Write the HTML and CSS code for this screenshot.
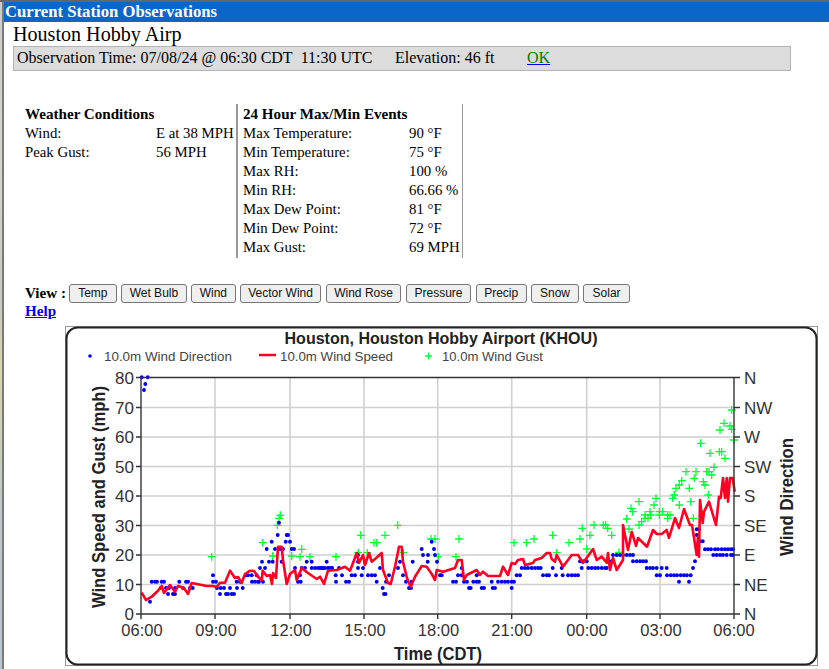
FILE: index.html
```html
<!DOCTYPE html>
<html lang="en">
<head>
<meta charset="utf-8">
<title>Current Station Observations</title>
<link rel="stylesheet" href="styles.css">
</head>
<body>
<div class="window">
  <div class="edge"></div>
  <main class="main">
    <h1 class="banner">Current Station Observations</h1>
    <div class="station">Houston Hobby Airp</div>
    <div class="obsbar">
      <span class="obstime">Observation Time: 07/08/24 @ 06:30 CDT&nbsp; 11:30 UTC</span>
      <span class="elev">Elevation: 46 ft</span>
      <a class="ok" href="#">OK</a>
    </div>
    <section class="tables">
      <div class="panel panel-left">
        <div class="ptitle">Weather Conditions</div>
        <div class="row"><span>Wind:</span><span>E at 38 MPH</span></div>
        <div class="row"><span>Peak Gust:</span><span>56 MPH</span></div>
      </div>
      <div class="panel panel-right">
        <div class="ptitle">24 Hour Max/Min Events</div>
        <div class="row"><span>Max Temperature:</span><span>90 °F</span></div>
        <div class="row"><span>Min Temperature:</span><span>75 °F</span></div>
        <div class="row"><span>Max RH:</span><span>100 %</span></div>
        <div class="row"><span>Min RH:</span><span>66.66 %</span></div>
        <div class="row"><span>Max Dew Point:</span><span>81 °F</span></div>
        <div class="row"><span>Min Dew Point:</span><span>72 °F</span></div>
        <div class="row"><span>Max Gust:</span><span>69 MPH</span></div>
      </div>
    </section>
    <div class="viewrow">
      <b class="viewlabel">View :</b>
      <button class="b-temp">Temp</button>
      <button class="b-wet">Wet Bulb</button>
      <button class="b-wind">Wind</button>
      <button class="b-vec">Vector Wind</button>
      <button class="b-rose">Wind Rose</button>
      <button class="b-pres">Pressure</button>
      <button class="b-prec">Precip</button>
      <button class="b-snow">Snow</button>
      <button class="b-solar">Solar</button>
    </div>
    <a class="help" href="#">Help</a>
    <svg class="chart" viewBox="65 326 753 340" width="753" height="340" role="img" aria-label="Wind chart">
      <defs>
        <marker id="dot" markerUnits="userSpaceOnUse" markerWidth="5" markerHeight="5" refX="2.5" refY="2.5"><circle cx="2.5" cy="2.5" r="1.95" class="m-dot"/></marker>
        <marker id="plus" markerUnits="userSpaceOnUse" markerWidth="8" markerHeight="8" refX="4" refY="4"><path d="M0 4h8M4 0v8" class="m-plus"/></marker>
      </defs>
      <rect class="frame-square" x="65.5" y="326.5" width="752" height="339"/>
      <rect class="frame-round" x="66.5" y="327.5" width="750" height="337" rx="11"/>

      <text class="title" x="441" y="344" textLength="313" lengthAdjust="spacingAndGlyphs">Houston, Houston Hobby Airport (KHOU)</text>
      <circle class="legend-dot" cx="90" cy="356" r="1.8"/>
      <text class="legend" x="104" y="361" textLength="128" lengthAdjust="spacingAndGlyphs">10.0m Wind Direction</text>
      <path class="legend-line" d="M259 355h17"/>
      <text class="legend" x="280" y="361" textLength="113" lengthAdjust="spacingAndGlyphs">10.0m Wind Speed</text>
      <path class="legend-plus" d="M425 356h7M428.5 352.500v7"/>
      <text class="legend" x="442" y="361" textLength="101" lengthAdjust="spacingAndGlyphs">10.0m Wind Gust</text>

      <path class="grid" d="M215 378V614M290 378V614M364 378V614M437.700 378V614M511.700 378V614M586.700 378V614M660 378V614M141 407.500H734M141 437H734M141 466.500H734M141 496H734M141 525.500H734M141 555H734M141 584.500H734"/>

      <polyline class="gust" points="211.700,556.700 262.700,542.700 272.700,556 277.300,525.300 279,518.300 280.300,515.300 291.700,556 300,556.700 301.700,549.300 310,556.700 336,556.700 358.300,552.700 360.700,535.300 367.300,552.700 374,542.700 376.700,542.700 385,535.300 397.700,525.300 403.300,552.700 431,539 435,539 438.300,556.700 456,556.700 459,539 514,542.700 526.500,542.700 534,539 552.700,535.300 556.700,552.700 569,542.700 580,539 582.300,528.300 586.700,549 590,535.300 594,525 603.300,525 605.700,525 607.700,528.300 611.700,535.300 619,552.300 626.700,519 629,529 631,508.300 632.700,511.700 639,501.700 639,525 641.700,521.700 645,515 645,518.300 648,518.300 650,511.700 650.700,515 654,505 656,498.300 659.300,511.700 659.300,515 662.700,511.700 667.700,515 667.700,518.300 670,515 672.700,498.300 674.300,495 676,488.300 679.300,485 681.700,480.700 679.300,505 686,471.700 689.300,488.300 690.700,501.700 693.300,518.300 694.300,478.300 696,471.700 700.700,443.300 703.300,481.700 705,485 708.300,495 706.700,471.700 710,453.300 709,471.700 711.700,475 714,467.300 719.300,451.700 721.700,451.700 725,458.300 720,430 724,423.300 730,426 731.700,429.300 734,440 731.700,410"/>

      <polyline class="dir" points="141.700,377.300 147.700,377.300 145.300,384 144,390 150,601.700 151.700,581.700 155,581.700 157,581.700 161.700,581.700 164,581.700 179.300,581.700 186,581.700 188,581.700 213,581.700 216,581.700 236.700,581.700 240,581.700 252,581.700 255,581.700 258,581.700 259,581.700 263,581.700 298,581.700 300.700,581.700 336,581.700 346,581.700 349,581.700 376.700,581.700 386,581.700 406,581.700 411.700,581.700 453,581.700 456,581.700 464,581.700 467,581.700 473.300,581.700 476.700,581.700 479,581.700 491.700,581.700 498,581.700 501.700,581.700 505,581.700 508,581.700 511.700,581.700 514,581.700 679,581.700 689,581.700 160.700,588 166,588 169,588 175,588 183,588 190,588 192.700,588 217,588 220.700,588 224,588 230,588 237,588 242.700,588 382.700,588 409,588 411,588 469,588 470.700,588 481.700,588 484,588 492.700,588 495,588 511.700,588 168,594 173,594 175,594 220,594 226,594 228,594 231.700,594 234,594 384,594 385.500,594 213,575.300 246,575.300 248,575.300 251.700,575.300 256.700,575.300 300,575.300 335.700,575.300 342,575.300 351.700,575.300 355,575.300 361.700,575.300 368,575.300 371.700,575.300 375,575.300 389,575.300 403,575.300 440,575.300 441.700,575.300 458,575.300 461.700,575.300 476.700,575.300 516.700,575.300 520,575.300 543,575.300 546.700,575.300 549,575.300 556,575.300 562.700,575.300 568,575.300 571.700,575.300 575,575.300 578,575.300 656.700,575.300 660,575.300 667,575.300 670.700,575.300 674,575.300 677,575.300 680.700,575.300 684,575.300 687,575.300 690.700,575.300 260,568 265,568 295,568 301.700,568 305,568 311.700,568 315,568 318,568 321.700,568 325,568 328,568 331.700,568 320,568 323,568 329,568 332,568 339,568 358,568 363,568 380,568 398,568 461.700,568 521.700,568 525,568 528,568 531.700,568 535,568 538,568 540.700,568 552.700,568 561.700,568 581.700,568 588.300,568 591.700,568 595,568 598,568 601.700,568 605,568 606.700,568 646.700,568 650,568 653,568 656.700,568 661.700,568 666.700,568 693,568 262,561.700 269,561.700 272.700,561.700 281.700,561.700 306.700,561.700 311.700,561.700 326.700,561.700 358,561.700 365,561.700 400,561.700 412.700,561.700 427.700,561.700 437,561.700 580,561.300 583,561.300 586.700,561.300 608,561.300 611.700,561.300 633,561.300 636.700,561.300 640,561.300 643,561.300 646,561.300 695,561.300 358,555 423,555 428,555 435,555 613,555 616.700,555 620,555 623,555 626.700,555 630,555 633,555 713.300,555 716.700,555 720,555 723,555 726.700,555 731,555 733,555 266.700,549 275,549 280,549 283,549 291.700,549 294,549 421.700,549 434,549 705,549.300 708,549.300 711,549.300 715,549.300 718,549.300 721.700,549.300 725,549.300 728,549.300 731,549.300 733,549.300 271.700,541.700 285.700,541.700 290,541.700 431.700,541.700 700,541.300 702.700,541.300 277.700,535 286.700,535 288,535 696.700,535 279,522.700 696.700,529.300 699,529.300"/>

      <polyline class="speed" points="141.700,592.700 146,600 151.700,596.700 158,590.700 161.700,586 164,593 170,585 175,591.700 178,586 184,588 188,594 191.700,583 206.700,586 213,586 216.700,587 220,582.700 225,582.700 230,570.700 235,578 238,577 241.700,583 245,574 250,570.700 254,571 258,576.700 261.700,580 262.700,570.700 266.700,576 270,575 272,584 273,573 276,578 278,546.700 281.700,546.700 283,560 286.700,584 290,574 295,570 296.700,580 301.700,568 308,573 316.700,579 320,576.700 324,584 328,570.700 336.700,570 345,566.700 350,570.700 353,563 356.700,553 359,563 363,555 365,565 369,553 371.700,561.700 375,559 381.700,553 383,570 388,583 390.700,584 395,566.700 399,546.700 401.700,546.700 403,561.700 407,578 410.700,587 415,576.700 421.700,566 426.700,566.700 431.700,574 435,580 436.700,570 443,571.700 455,568 458,560 461.700,560 464,580 466.700,575 476.700,570 480,575 483,571.700 488,576 500,576 503,566.700 508,575 511.700,563 515,564 518,560 523,559 525,565 533,563 535,560 541.700,558 546.700,553 550,553 551.700,559 555,561.700 556.700,555 563,566.700 571.700,555 578,555 583,563 593,549 596.700,560 601.700,556.700 606.700,562.700 608,553 610,570 613,558 616.700,570 623,560 623,525 628,550 631.700,531.700 636,546 638,538 647,546.700 653,530 656.700,534 661.700,534 666.700,530 669,538 675,518 679,528 684,509 690,525 692,525 696.700,555 698,536.700 699,556.700 700,500 702.700,523 704,511.700 709,501.700 716,525 719,496.700 720.700,498 723,478 725,498 726.700,478 728,501.700 730,478 732.700,478 734.700,491.700"/>

      <path class="axis" d="M141 377.500H734M141 614H734M141 377.500V614M734 377.500V614"/>
      <path class="tick" d="M136 377.500h5M136 407.500h5M136 437h5M136 466.500h5M136 496h5M136 525.500h5M136 555h5M136 584.500h5M136 614h5M734 377.500h6M734 407.500h6M734 437h6M734 466.500h6M734 496h6M734 525.500h6M734 555h6M734 584.500h6M734 614h6M141 614v5M215 614v5M290 614v5M364 614v5M437.700 614v5M511.700 614v5M586.700 614v5M660 614v5M734 614v5"/>

      <g class="ylabels">
        <text x="134" y="383.500">80</text><text x="134" y="413.500">70</text><text x="134" y="443">60</text><text x="134" y="472.500">50</text><text x="134" y="502">40</text><text x="134" y="531.500">30</text><text x="134" y="561">20</text><text x="134" y="590.500">10</text><text x="134" y="620">0</text>
      </g>
      <g class="rlabels">
        <text x="744" y="383.500">N</text><text x="744" y="413.500">NW</text><text x="744" y="443">W</text><text x="744" y="472.500">SW</text><text x="744" y="502">S</text><text x="744" y="531.500">SE</text><text x="744" y="561">E</text><text x="744" y="590.500">NE</text><text x="744" y="620">N</text>
      </g>
      <g class="xlabels">
        <text x="142" y="636">06:00</text><text x="216" y="636">09:00</text><text x="291" y="636">12:00</text><text x="365" y="636">15:00</text><text x="438.500" y="636">18:00</text><text x="512" y="636">21:00</text><text x="587" y="636">00:00</text><text x="661" y="636">03:00</text><text x="734" y="636">06:00</text>
      </g>
      <text class="axislabel" x="438" y="660" textLength="88" lengthAdjust="spacingAndGlyphs">Time (CDT)</text>
      <text class="axislabel" transform="translate(105 497) rotate(-90)" textLength="222" lengthAdjust="spacingAndGlyphs">Wind Speed and Gust (mph)</text>
      <text class="axislabel" transform="translate(793 497) rotate(-90)" textLength="118" lengthAdjust="spacingAndGlyphs">Wind Direction</text>
    </svg>
  </main>
</div>
</body>
</html>
```
FILE: styles.css
```css
html, body {
  margin: 0;
  padding: 0;
  background: #fff;
  overflow: hidden;
}
.window {
  display: flex;
  height: 669px;
  box-sizing: border-box;
  border-top: 2px solid #666;
  font-family: "Liberation Serif", serif;
  font-size: 14.8px;
  color: #000;
}
.edge {
  flex: 0 0 2px;
  border-right: 2px solid #7a7a7a;
  background: linear-gradient(180deg, #ccc 0, #d6d6cc 25%, #c8c8c0 45%, #d8d8a8 55%, #c0c8c8 75%, #b8c4d0 100%);
}
.main {
  flex: 1;
  min-width: 0;
}
.banner {
  margin: 0;
  height: 20px;
  padding-left: 1px;
  background: #0b66c8;
  color: #fff;
  font-size: 16.7px;
  line-height: 20px;
  font-weight: bold;
}
.station {
  margin-left: 9px;
  height: 24px;
  font-size: 20.1px;
  line-height: 25px;
}
.obsbar {
  display: flex;
  align-items: center;
  box-sizing: border-box;
  width: 778px;
  height: 25px;
  margin-left: 9px;
  padding: 0 0 1px 3px;
  background: #dcdcdc;
  border: 1px solid #b4b4b4;
  font-size: 16px;
}
.obstime { width: 378px; }
.elev { width: 132px; }
.ok { color: #008000; text-decoration-color: #0000ee; }
.tables {
  display: flex;
  margin-top: 33px;
  height: 154px;
}
.panel {
  box-sizing: border-box;
  padding-top: 1px;
  line-height: 19px;
}
.panel-left {
  width: 234px;
  padding-left: 21px;
  border-right: 2px solid #999;
}
.panel-right {
  width: 225px;
  padding-left: 5px;
  border-right: 1px solid #999;
}
.ptitle { font-weight: bold; font-size: 15.1px; }
.row { display: grid; white-space: nowrap; }
.panel-left .row { grid-template-columns: 131px auto; }
.panel-right .row { grid-template-columns: 166px auto; }
.viewrow {
  display: flex;
  align-items: center;
  gap: 4.4px;
  height: 19px;
  margin-top: 26px;
  padding-left: 21px;
}
.viewlabel { width: 39.6px; font-size: 15.1px; white-space: nowrap; }
.viewrow button {
  box-sizing: border-box;
  height: 19px;
  padding: 0;
  border: 1px solid #767676;
  border-radius: 3px;
  background: #efefef;
  color: #111;
  font-family: "Liberation Sans", sans-serif;
  font-size: 12px;
  line-height: 15px;
}
.b-temp { width: 47.7px; }
.b-wet { width: 65.7px; }
.b-wind { width: 44.4px; }
.b-vec { width: 81.4px; }
.b-rose { width: 75.7px; }
.b-pres { width: 65.4px; }
.b-prec { width: 51.2px; }
.b-snow { width: 47.7px; }
.b-solar { width: 46.7px; }
.help {
  display: block;
  width: max-content;
  margin-left: 21px;
  height: 17px;
  line-height: 17px;
  font-size: 15.1px;
  color: #0000ee;
  font-weight: bold;
}
.chart {
  display: block;
  margin: 6px 0 0 61px;
}
.chart text { font-family: "Liberation Sans", sans-serif; }
.frame-square { fill: #fff; stroke: #999; stroke-width: 1; }
.frame-round { fill: #fff; stroke: #222; stroke-width: 2; }
.title { font-size: 16.5px; font-weight: bold; text-anchor: middle; fill: #222; }
.legend { font-size: 13px; fill: #444; }
.legend-dot { fill: #00f; }
.legend-line { stroke: #ff0022; stroke-width: 2.500; fill: none; }
.legend-plus { stroke: #00ff33; stroke-width: 1.300; fill: none; }
.grid { stroke: #d0d0d0; stroke-width: 1.600; fill: none; }
.gust, .dir { fill: none; stroke: none; }
.gust { marker: url(#plus); }
.dir { marker: url(#dot); }
.m-dot { fill: #0000f0; }
.m-plus { stroke: #00ff33; stroke-width: 1.300; fill: none; }
.speed { fill: none; stroke: #ff0022; stroke-width: 2.600; stroke-linejoin: round; }
.axis, .tick { stroke: #333; stroke-width: 1.400; fill: none; }
.ylabels text { font-size: 17px; text-anchor: end; fill: #333; }
.rlabels text { font-size: 17px; fill: #333; }
.xlabels text { font-size: 16.5px; text-anchor: middle; fill: #333; }
.axislabel { font-size: 17.5px; font-weight: bold; text-anchor: middle; fill: #222; }
```
